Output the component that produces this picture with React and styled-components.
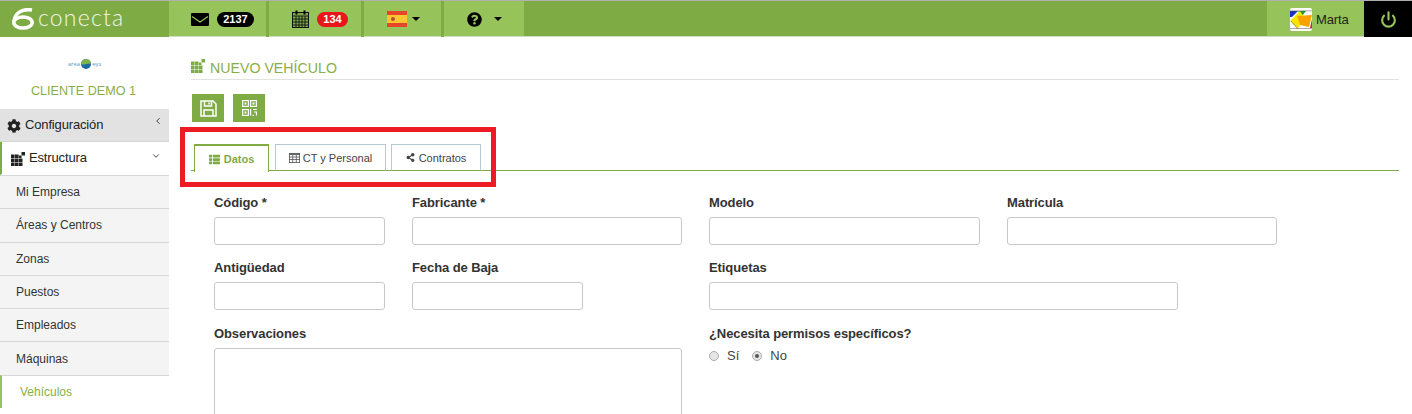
import React from 'react';
import styled, { createGlobalStyle } from 'styled-components';
import { FaQuestionCircle, FaCog, FaThList, FaShareAlt } from 'react-icons/fa';
import { FiPower, FiChevronLeft, FiChevronDown } from 'react-icons/fi';

const GREEN = '#7fab45';
const LIGHT = '#96c45a';

const Global = createGlobalStyle`
  * { box-sizing: border-box; }
  html, body { margin: 0; padding: 0; background: #fff; overflow: hidden; }
  body { font-family: "Liberation Sans", Arial, sans-serif; font-size: 13px; color: #333; }
`;

const Page = styled.div`
  position: relative;
  width: 1412px;
  height: 414px;
  overflow: hidden;
`;

const TopBar = styled.header`
  display: flex;
  height: 37px;
  background: ${LIGHT};
  border-top: 1px solid #b0b0b0;
  box-shadow: inset 0 -1px 0 #cfdcc0;
`;
const Brand = styled.div`
  width: 169px;
  background: ${GREEN};
  display: flex;
  align-items: center;
  padding-left: 12px;
  gap: 4px;
  color: #fff;
`;
const LogoMark = styled.span`
  display: flex;
  margin-top: -1px;
`;
const BrandText = styled.span`
  font-family: Lato, sans-serif;
  font-weight: 300;
  font-size: 23px;
  letter-spacing: 1.2px;
  color: #f2f6ec;
  margin-top: -4px;
`;
const NavCell = styled.div`
  width: ${p => p.$w}px;
  display: flex;
  align-items: center;
  padding-left: ${p => p.$pl}px;
  gap: ${p => p.$gap || 8}px;
  border-right: ${p => p.$last ? '0' : `3px solid ${GREEN}`};
  color: #000;
`;
const Pill = styled.span`
  background: ${p => p.$red ? '#e8161b' : '#000'};
  color: #fff;
  font-weight: 700;
  font-size: 11px;
  height: 15px;
  min-width: ${p => p.$w}px;
  border-radius: 8px;
  display: flex;
  align-items: center;
  justify-content: center;
`;
const Caret = styled.span`
  width: 0;
  height: 0;
  border-left: 4px solid transparent;
  border-right: 4px solid transparent;
  border-top: 4px solid #000;
`;
const Spacer = styled.div`
  flex: 1;
  background: ${GREEN};
  box-shadow: inset 0 -1px 0 #cfdcc0;
`;
const UserCell = styled.div`
  width: 97px;
  display: flex;
  align-items: center;
  gap: 4px;
  padding-left: 23px;
  font-size: 13px;
  letter-spacing: -0.1px;
  color: #222;
`;
const PowerCell = styled.div`
  width: 48px;
  background: #000;
  display: flex;
  align-items: center;
  justify-content: center;
  color: ${LIGHT};
`;

const Body = styled.div`
  display: flex;
  align-items: flex-start;
`;
const Sidebar = styled.aside`
  width: 169px;
  flex-shrink: 0;
`;
const ClientBox = styled.div`
  height: 72px;
  display: flex;
  flex-direction: column;
  align-items: center;
  padding-top: 21px;
`;
const ClientLogo = styled.div`
  display: flex;
  align-items: center;
  gap: 1px;
  font-family: "Open Sans", sans-serif;
  font-size: 6px;
  color: #5b9bc9;
  height: 11px;
`;
const ClientName = styled.div`
  margin-top: 15px;
  margin-right: 2px;
  font-size: 12.6px;
  color: #8aae47;
`;
const MenuHead = styled.div`
  height: 33px;
  display: flex;
  align-items: center;
  background: ${p => p.$grey ? '#e2e2e2' : '#fff'};
  border-bottom: 1px solid ${p => p.$grey ? '#d4d4d4' : 'transparent'};
  border-left: ${p => p.$active ? `2px solid ${GREEN}` : '0'};
  padding-left: ${p => p.$active ? 9 : 7}px;
  padding-right: 8px;
  color: #222;
  font-size: 13px;
  letter-spacing: -0.15px;
  gap: 4px;
`;
const MenuIcon = styled.span`
  display: flex;
  margin-top: 2px;
`;
const MenuLabel = styled.span`
  flex: 1;
  margin-top: -2px;
`;
const Chevron = styled.span`
  display: flex;
  margin-top: ${p => p.$up}px;
  margin-right: ${p => p.$mr || 0}px;
`;
const SubItem = styled.div`
  height: 33.3px;
  display: flex;
  align-items: center;
  padding-left: ${p => p.$active ? 18 : 16}px;
  font-size: 12px;
  background: ${p => p.$active ? '#fff' : '#f4f4f4'};
  color: ${p => p.$active ? '#8aae47' : '#333'};
  border-top: 1px solid #d8d8d8;
  border-left: ${p => p.$active ? `2px solid ${LIGHT}` : '0'};
`;

const Main = styled.main`
  flex: 1;
  padding: 22px 13px 0 22px;
`;
const Title = styled.h1`
  margin: 0;
  height: 21px;
  display: flex;
  align-items: flex-start;
  gap: 5px;
  font-size: 14.2px;
  line-height: 19px;
  font-weight: 400;
  color: #8aae47;
  border-bottom: 1px solid #e2e2e2;
`;
const Toolbar = styled.div`
  display: flex;
  gap: 9px;
  margin-top: 14px;
  padding-left: 1px;
`;
const ToolButton = styled.div`
  width: 32px;
  height: 28px;
  background: ${GREEN};
  color: #fff;
  display: flex;
  align-items: center;
  justify-content: center;
`;
const Tabs = styled.div`
  display: flex;
  margin-top: 22px;
  padding-left: 3px;
  gap: 5px;
  height: 27px;
  border-bottom: 1px solid ${GREEN};
`;
const Tab = styled.div`
  width: ${p => p.$w}px;
  height: ${p => p.$active ? 28 : 27}px;
  margin-right: ${p => p.$active ? 1 : 0}px;
  display: flex;
  align-items: center;
  justify-content: center;
  gap: ${p => p.$gap || 4}px;
  font-size: 11px;
  background: #fff;
  color: ${p => p.$active ? '#7fab45' : '#444'};
  font-weight: ${p => p.$active ? 700 : 400};
  border: 1px solid ${p => p.$active ? GREEN : '#b7c9d3'};
  border-top: ${p => p.$active ? `2px solid ${GREEN}` : '1px solid #b7c9d3'};
  border-bottom: ${p => p.$active ? '0' : `1px solid ${GREEN}`};
`;
const Highlight = styled.div`
  position: absolute;
  left: 180px;
  top: 127px;
  width: 316px;
  height: 60px;
  border: 5px solid #ed1c24;
  pointer-events: none;
`;
const Form = styled.div`
  display: grid;
  grid-template-columns: 198px 297px 298px 298px;
  grid-template-rows: 65px 66px auto;
  margin-top: 23px;
  padding-left: 23px;
`;
const Field = styled.div`
  grid-column: ${p => p.$span ? `span ${p.$span}` : 'auto'};
`;
const Label = styled.label`
  display: block;
  font-size: 13px;
  line-height: 16px;
  font-weight: 700;
  letter-spacing: -0.09px;
  color: #333;
  height: 17px;
  padding-top: 1px;
  margin-bottom: 6px;
`;
const Input = styled.div`
  width: ${p => p.$w}px;
  height: 28px;
  border: 1px solid #c9c9c9;
  border-radius: 3px;
  background: #fff;
`;
const TextArea = styled(Input)`
  height: 90px;
`;
const Radios = styled.div`
  display: flex;
  align-items: center;
  font-size: 13px;
  color: #444;
  margin-top: 3px;
`;
const Radio = styled.span`
  width: 10px;
  height: 10px;
  border-radius: 50%;
  background: #e6e6e6;
  border: 1px solid #aaa;
  margin-right: 8px;
  display: flex;
  align-items: center;
  justify-content: center;
  &::after {
    content: '';
    width: 4px;
    height: 4px;
    border-radius: 50%;
    background: ${p => p.$on ? '#555' : 'transparent'};
  }
`;
const RadioText = styled.span`
  margin-right: 13px;
`;

const SixLogo = () => (
  <svg width="22" height="22" viewBox="0 0 22 22" fill="none" stroke="#fff" strokeWidth="3.500">
    <path d="M20 2 C11 0.500 3.500 4 1.900 13" />
    <ellipse cx="11" cy="14.500" rx="9.200" ry="5.600" />
  </svg>
);

const EnvelopeIcon = () => (
  <svg width="18" height="13" viewBox="0 0 18 13">
    <rect width="18" height="13" rx="1" fill="#000" />
    <path d="M1 3.500 L9 9 L17 3.500" fill="none" stroke={LIGHT} strokeWidth="1.200" />
  </svg>
);

const CalendarIcon = () => (
  <svg width="17" height="18" viewBox="0 0 17 18">
    <rect x=".5" y="2.500" width="16" height="15" fill="#7fa94a" stroke="#111" />
    <path fill="none" stroke="#111" strokeWidth=".9" d="M1 6h15M1 9h15M1 12h15M1 15h15M4 6v11M7 6v11M10 6v11M13 6v11" />
    <path fill="none" stroke="#000" strokeWidth="2" d="M4.500 0.500v4M12.500 0.500v4" />
  </svg>
);

const SpainFlag = () => (
  <svg width="20" height="16" viewBox="0 0 20 16">
    <rect width="20" height="16" fill="#e8442a" />
    <rect y="4" width="20" height="8" fill="#fbc531" />
    <circle cx="6" cy="8" r="2" fill="#b5502a" />
  </svg>
);

const UserAvatar = () => (
  <svg width="22" height="23" viewBox="0 0 22 23">
    <rect width="22" height="23" rx="2" fill="#fff" />
    <path fill="#1a35c4" d="M0 3h8L2 9H0z" />
    <path fill="#14a02c" d="M8 3h8l-4 5z" />
    <path fill="#e81c1c" d="M8 20h12l2-9v9z" />
    <path fill="#f8e600" d="M10 3L0 13l8 8 6-12z" />
    <path fill="#f7a400" d="M7 8l15-1-3 12-9-2z" />
    <path fill="none" stroke="#555" strokeWidth=".5" d="M0 2.800h22M0 20.500h22M1 13l7 8" />
  </svg>
);

const GridIcon = ({ color }) => (
  <svg width="14" height="14" viewBox="0 0 14 14" fill={color}>
    <path d="M0 2.500h3.600v3.600H0zm4 0h3.600v3.600H4zM8 3.500h2.500v2.600H8zM0 6.500h3.600v3.600H0zm4 0h3.600v3.600H4zm4 0h3.500v3.600H8zM0 10.500h3.600V14H0zm4 0h3.600V14H4zm4 0h3.500V14H8z" />
    <path d="M10.500 0H14v3.500h-3.500z" />
  </svg>
);

const SaveIcon = () => (
  <svg width="17" height="17" viewBox="0 0 17 17" fill="none" stroke="#fff" strokeWidth="1.500">
    <path d="M1 1h12l3 3v12H1z" />
    <path d="M4.500 1v5h7V1M4 16v-6h9v6" />
    <path d="M9 2.500v2" />
  </svg>
);

const QrIcon = () => (
  <svg width="15" height="16" viewBox="0 0 15 16" fill="none" stroke="#fff" strokeWidth="1.200">
    <rect x=".6" y=".6" width="5.800" height="5.800" />
    <rect x="8.600" y=".6" width="5.800" height="5.800" />
    <rect x=".6" y="9.600" width="5.800" height="5.800" />
    <path d="M8.600 9v6.500M11 9.500h3.800M12 12h2.500v3.500M10.500 15.400h1.500" />
    <path fill="#fff" stroke="none" d="M2.500 2.500h2v2h-2zM10.500 2.500h2v2h-2zM2.500 11.500h2v2h-2z" />
  </svg>
);

const TableIcon = () => (
  <svg width="11" height="10" viewBox="0 0 11 10" fill="none" stroke="#555" strokeWidth=".8">
    <rect x=".4" y=".4" width="10.200" height="9.200" />
    <path strokeWidth="1.400" d="M0 1.200h11" />
    <path d="M0 4h11M0 6.500h11M3.700 2v8M7.300 2v8" />
  </svg>
);

const menu = ['Mi Empresa', 'Áreas y Centros', 'Zonas', 'Puestos', 'Empleados', 'Máquinas'];

export default function App() {
  return (
    <Page>
      <Global />
      <TopBar>
        <Brand>
          <LogoMark><SixLogo /></LogoMark>
          <BrandText>conecta</BrandText>
        </Brand>
        <NavCell $w={100} $pl={22} $gap={8}>
          <EnvelopeIcon />
          <Pill $w={37}>2137</Pill>
        </NavCell>
        <NavCell $w={95} $pl={23} $gap={8}>
          <CalendarIcon />
          <Pill $red $w={31}>134</Pill>
        </NavCell>
        <NavCell $w={80} $pl={23} $gap={5}>
          <SpainFlag />
          <Caret />
        </NavCell>
        <NavCell $last $w={80} $pl={23} $gap={12}>
          <FaQuestionCircle size={15} />
          <Caret />
        </NavCell>
        <Spacer />
        <UserCell>
          <UserAvatar />
          Marta
        </UserCell>
        <PowerCell>
          <FiPower size={17} strokeWidth={3} />
        </PowerCell>
      </TopBar>
      <Body>
        <Sidebar>
          <ClientBox>
            <ClientLogo>
              area
              <svg width="10" height="10" viewBox="0 0 10 10">
                <circle cx="5" cy="5" r="5" fill="#1b6aa5" />
                <path d="M0 5a5 5 0 0 1 10 0c-3-2-6 2-10 0z" fill="#7cb54a" />
              </svg>
              eys
            </ClientLogo>
            <ClientName>CLIENTE DEMO 1</ClientName>
          </ClientBox>
          <MenuHead $grey>
            <MenuIcon><FaCog size={14} /></MenuIcon>
            <MenuLabel>Configuración</MenuLabel>
            <Chevron $up={-8} $mr={-2}><FiChevronLeft size={10} strokeWidth={2} /></Chevron>
          </MenuHead>
          <MenuHead $active>
            <MenuIcon><GridIcon color="#222" /></MenuIcon>
            <MenuLabel>Estructura</MenuLabel>
            <Chevron $up={-5}><FiChevronDown size={10} strokeWidth={2} /></Chevron>
          </MenuHead>
          {menu.map(m => <SubItem key={m}>{m}</SubItem>)}
          <SubItem $active>Vehículos</SubItem>
        </Sidebar>
        <Main>
          <Title>
            <GridIcon color={GREEN} />
            NUEVO VEHÍCULO
          </Title>
          <Toolbar>
            <ToolButton><SaveIcon /></ToolButton>
            <ToolButton><QrIcon /></ToolButton>
          </Toolbar>
          <Tabs>
            <Tab $active $w={75}><FaThList size={11} />Datos</Tab>
            <Tab $w={111} $gap={3}><TableIcon />CT y Personal</Tab>
            <Tab $w={90}><FaShareAlt size={9} />Contratos</Tab>
          </Tabs>
          <Form>
            <Field><Label>Código *</Label><Input $w={171} /></Field>
            <Field><Label>Fabricante *</Label><Input $w={270} /></Field>
            <Field><Label>Modelo</Label><Input $w={271} /></Field>
            <Field><Label>Matrícula</Label><Input $w={270} /></Field>
            <Field><Label>Antigüedad</Label><Input $w={171} /></Field>
            <Field><Label>Fecha de Baja</Label><Input $w={171} /></Field>
            <Field $span={2}><Label>Etiquetas</Label><Input $w={469} /></Field>
            <Field $span={2}><Label>Observaciones</Label><TextArea $w={468} /></Field>
            <Field $span={2}>
              <Label>¿Necesita permisos específicos?</Label>
              <Radios>
                <Radio /><RadioText>Sí</RadioText>
                <Radio $on /><RadioText>No</RadioText>
              </Radios>
            </Field>
          </Form>
        </Main>
      </Body>
      <Highlight />
    </Page>
  );
}
